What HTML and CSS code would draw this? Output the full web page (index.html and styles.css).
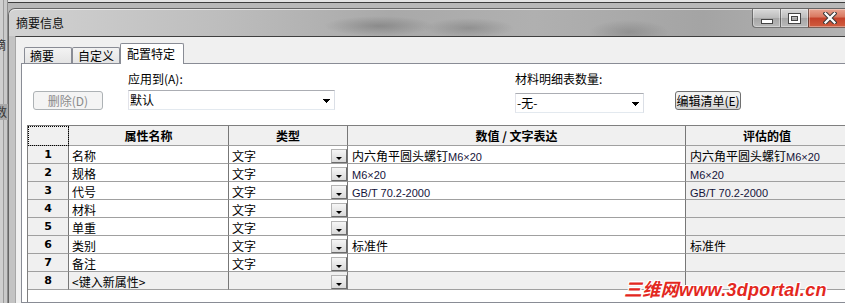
FILE: index.html
```html
<!DOCTYPE html>
<html lang="zh-CN">
<head>
    <meta charset="UTF-8">
    <title>摘要信息</title>
    <link rel="stylesheet" href="styles.css">
</head>
<body>
    <div class="behind">
        <span class="bk-a">摘</span>
        <span class="bk-b">数</span>
    </div>
    <div class="window">
        <div class="titlebar">
            <span class="title">摘要信息</span>
            <div class="caps">
                <span class="cap min"><i></i></span>
                <span class="cap max"><i></i></span>
                <span class="cap close">
                    <svg width="14" height="12" viewBox="0 0 14 12">
                        <path d="M2.5 1.5 L11.5 10.5 M11.5 1.5 L2.5 10.5" stroke="#3b3b3b" stroke-width="4.2" stroke-linecap="square"/>
                        <path d="M2.5 1.5 L11.5 10.5 M11.5 1.5 L2.5 10.5" stroke="#fff" stroke-width="2.2" stroke-linecap="square"/>
                    </svg>
                </span>
            </div>
        </div>
        <div class="client">
            <div class="tabs">
                <span class="tab">摘要</span>
                <span class="tab">自定义</span>
                <span class="tab on">配置特定</span>
            </div>
            <div class="panel">
                <div class="controls">
                    <button class="btn del">删除(D)</button>
                    <div class="field apply">
                        <label>应用到(A):</label>
                        <div class="combo"><span>默认</span>
                            <svg class="arrow" width="7" height="4" viewBox="0 0 7 4" shape-rendering="crispEdges"><path d="M0 0h7v1h-1v1h-1v1h-1v1h-1v-1h-1v-1h-1v-1h-1z"/></svg>
                        </div>
                    </div>
                    <div class="field qty">
                        <label>材料明细表数量:</label>
                        <div class="combo"><span>-无-</span>
                            <svg class="arrow" width="7" height="4" viewBox="0 0 7 4" shape-rendering="crispEdges"><path d="M0 0h7v1h-1v1h-1v1h-1v1h-1v-1h-1v-1h-1v-1h-1z"/></svg>
                        </div>
                    </div>
                    <button class="btn edit">编辑清单(E)</button>
                </div>

                <div class="grid">
                    <div class="cells">
                        <div class="hd corner"></div>
                        <div class="hd">属性名称</div>
                        <div class="hd">类型</div>
                        <div class="hd">数值 / 文字表达</div>
                        <div class="hd">评估的值</div>

                        <div class="num">1</div>
                        <div class="c name">名称</div>
                        <div class="c type"><span>文字</span><b class="dd"></b></div>
                        <div class="c val">内六角平圆头螺钉<span class="en">M6×20</span></div>
                        <div class="c val eval">内六角平圆头螺钉<span class="en">M6×20</span></div>

                        <div class="num">2</div>
                        <div class="c name">规格</div>
                        <div class="c type"><span>文字</span><b class="dd"></b></div>
                        <div class="c val"><span class="en">M6×20</span></div>
                        <div class="c val eval"><span class="en">M6×20</span></div>

                        <div class="num">3</div>
                        <div class="c name">代号</div>
                        <div class="c type"><span>文字</span><b class="dd"></b></div>
                        <div class="c val"><span class="en">GB/T 70.2-2000</span></div>
                        <div class="c val eval"><span class="en">GB/T 70.2-2000</span></div>

                        <div class="num">4</div>
                        <div class="c name">材料</div>
                        <div class="c type"><span>文字</span><b class="dd"></b></div>
                        <div class="c val"></div>
                        <div class="c val eval"></div>

                        <div class="num">5</div>
                        <div class="c name">单重</div>
                        <div class="c type"><span>文字</span><b class="dd"></b></div>
                        <div class="c val"></div>
                        <div class="c val eval"></div>

                        <div class="num">6</div>
                        <div class="c name">类别</div>
                        <div class="c type"><span>文字</span><b class="dd"></b></div>
                        <div class="c val">标准件</div>
                        <div class="c val eval">标准件</div>

                        <div class="num">7</div>
                        <div class="c name">备注</div>
                        <div class="c type"><span>文字</span><b class="dd"></b></div>
                        <div class="c val"></div>
                        <div class="c val eval"></div>

                        <div class="num">8</div>
                        <div class="c name new">&lt;键入新属性&gt;</div>
                        <div class="c type new"><span></span><b class="dd"></b></div>
                        <div class="c val new"></div>
                        <div class="c val eval"></div>
                    </div>
                </div>
            </div>
        </div>
    </div>
    <div class="watermark">三维网www.3dportal.cn</div>
</body>
</html>
```

FILE: styles.css
```css
/* page + desktop behind the dialog */
html, body {
    margin: 0;
    padding: 0;
    overflow: hidden;
}

body {
    width: 845px;
    height: 303px;
    display: flex;
    font-family: "Noto Sans CJK SC", "Liberation Sans", sans-serif;
    font-size: 12px;
    color: #000;
    background: linear-gradient(#e3e3e3 0 2px, #3e3e3e 2px 3px, #b8b8b8 3px);
}

.behind {
    width: 8px;
    flex-shrink: 0;
    display: flex;
    flex-direction: column;
    overflow: hidden;
    background: linear-gradient(90deg, #cfcfcf 0 3px, #9c9c9c 3px 4px, #c9c9c9 4px 7px, #8e8e8e 7px);
    color: #333;
    line-height: 14px;
}

.bk-a {
    margin: 38px 0 0 -6px;
}

.bk-b {
    margin: 52px 0 0 -5px;
    padding: 1px 0;
    background: #a9a9a9;
}

/* window frame */
.window {
    flex-shrink: 0;
    width: 847px;
    margin-top: 8px;
    display: flex;
    flex-direction: column;
    border: 1px solid #666;
    border-bottom: 0;
    border-radius: 7px 7px 0 0;
    background: #c3c3c3;
}

.titlebar {
    height: 27px;
    display: flex;
    align-items: flex-start;
    border-radius: 6px 6px 0 0;
    background:
        radial-gradient(ellipse 55px 10px at 370px 17px, rgba(80, 80, 80, 0.35), transparent),
        radial-gradient(ellipse 45px 10px at 460px 19px, rgba(80, 80, 80, 0.3), transparent),
        radial-gradient(ellipse 40px 12px at 620px 23px, rgba(90, 90, 90, 0.3), transparent),
        linear-gradient(90deg, #d2d2d2, #bdbdbd 25%, #a9a9a9 45%, #b0b0b0 62%, #a4a4a4 82%, #b4b4b4);
    box-shadow: inset 0 1px 0 rgba(255, 255, 255, 0.6);
}

.title {
    margin: 7px 0 0 7px;
    line-height: 14px;
    color: #111;
}

.caps {
    margin-left: auto;
    margin-right: 5px;
    display: flex;
    height: 19px;
}

.cap {
    box-sizing: border-box;
    height: 19px;
    display: flex;
    justify-content: center;
    align-items: center;
    border: 1px solid rgba(50, 50, 50, 0.6);
    border-top: 0;
    background: linear-gradient(#d9d9d9, #bcbcbc 50%, #a6a6a6 50%, #b9b9b9);
    box-shadow: inset 0 0 0 1px rgba(255, 255, 255, 0.35);
}

.min {
    width: 28px;
    border-radius: 0 0 0 4px;
    border-right: 0;
}

.min i {
    width: 10px;
    height: 3px;
    margin-top: 6px;
    background: #fff;
    border: 1px solid #444;
}

.max {
    width: 28px;
    border-right: 0;
}

.max i {
    width: 7px;
    height: 5px;
    border: 2px solid #fff;
    outline: 1px solid #444;
    box-shadow: inset 0 0 0 1px #444;
}

.close {
    width: 43px;
    border-radius: 0 0 4px 0;
    background: linear-gradient(#e8a591, #d9775f 45%, #c4412a 50%, #d15d3f);
}

/* client area and tabs */
.client {
    flex: 1;
    margin: 0 6px;
    display: flex;
    flex-direction: column;
    border-top: 1px solid #3f3f3f;
    border-left: 1px solid #a6a6a6;
    background: #f0f0f0;
}

.tabs {
    display: flex;
    align-items: flex-end;
    padding: 6px 0 0 8px;
}

.tab {
    box-sizing: border-box;
    min-width: 48px;
    height: 16px;
    padding: 1px 3px 0 5px;
    line-height: 14px;
    border: 1px solid #898c95;
    border-bottom: 0;
    border-radius: 2px 2px 0 0;
    background: linear-gradient(#f3f3f3, #e4e4e4);
}

.tab.on {
    position: relative;
    height: 21px;
    margin-bottom: -1px;
    padding: 3px 8px 0 6px;
    background: #fff;
}

.panel {
    flex: 1;
    margin-left: 5px;
    display: flex;
    flex-direction: column;
    border: 1px solid #898c95;
    background: #fff;
}

.controls {
    display: flex;
    align-items: flex-start;
}

.btn {
    box-sizing: border-box;
    height: 19px;
    margin-top: 27px;
    padding: 0;
    font: inherit;
    line-height: 16px;
    border-radius: 3px;
}

.del {
    width: 70px;
    margin-left: 11px;
    border: 1px solid #adb2b5;
    background: #f4f4f4;
    color: #8a8a8a;
}

.edit {
    width: 66px;
    margin-left: 31px;
    border: 1px solid #707070;
    background: linear-gradient(#f2f2f2 0 45%, #e3e3e3 50%, #d4d4d4);
    color: #000;
}

.field {
    display: flex;
    flex-direction: column;
    margin-top: 8px;
}

.field label {
    line-height: 14px;
}

.apply {
    margin-left: 25px;
}

.apply .combo {
    width: 207px;
    margin-top: 4px;
}

.qty {
    margin-left: 180px;
}

.qty .combo {
    width: 129px;
    margin-top: 7px;
}

.combo {
    box-sizing: border-box;
    height: 20px;
    display: flex;
    align-items: center;
    padding: 0 4px 0 1px;
    border: 1px solid;
    border-color: #abadb3 #dbdfe6 #e3e9ef #e2e3ea;
    background: #fff;
}

.combo span {
    flex: 1;
    line-height: 14px;
}

.arrow {
    margin-top: 2px;
}

/* property grid */
.grid {
    flex: 1;
    margin: 12px 0 0 5px;
    border-top: 1px solid #7f7f7f;
    border-left: 1px solid #7f7f7f;
    background: #fff;
}

.cells {
    display: grid;
    grid-template-columns: 41px 160px 119px 338px 1fr;
    grid-template-rows: 20px;
    grid-auto-rows: 18px;
}

.cells > div {
    box-sizing: border-box;
    overflow: hidden;
    white-space: nowrap;
    border-right: 1px solid #777;
    border-bottom: 1px solid #a0a0a0;
}

.hd {
    background: #f0f0f0;
    font-weight: bold;
    text-align: center;
    line-height: 19px;
}

.corner {
    outline: 1px dotted #000;
    outline-offset: -1px;
}

.num {
    background: #f0f0f0;
    font-family: "DejaVu Sans", sans-serif;
    font-size: 11px;
    font-weight: bold;
    text-align: center;
    line-height: 16px;
    padding-top: 1px;
}

.c {
    padding: 2px 0 0 3px;
    line-height: 15px;
}

.val {
    padding-left: 4px;
}

.eval,
.new {
    background: #f0f0f0;
}

.type {
    display: flex;
    padding-right: 0;
}

.type span {
    flex: 1;
}

.dd {
    box-sizing: border-box;
    width: 16px;
    height: 14px;
    align-self: flex-end;
    display: flex;
    justify-content: center;
    align-items: flex-end;
    padding-bottom: 2px;
    border: 1px solid;
    border-color: #b4b4b4 #6c6c6c #6c6c6c #b4b4b4;
    background: linear-gradient(#f6f6f6, #dadada);
}

.dd::after {
    content: "";
    border-top: 3px solid #000;
    border-left: 3px solid transparent;
    border-right: 3px solid transparent;
}

.en {
    font-family: "Liberation Sans", sans-serif;
    font-size: 11px;
    color: #14143a;
}

/* site watermark stamped on the screenshot */
.watermark {
    position: absolute;
    left: 624px;
    top: 280px;
    font-family: "Liberation Sans", "Noto Sans CJK SC", sans-serif;
    font-size: 18px;
    font-weight: bold;
    font-style: italic;
    letter-spacing: 0.3px;
    line-height: 20px;
    color: #e3281e;
    text-shadow: 1px 0 #fff, -1px 0 #fff, 0 1px #fff, 0 -1px #fff,
        1px 1px #fff, -1px -1px #fff, 1px -1px #fff, -1px 1px #fff;
}
```
